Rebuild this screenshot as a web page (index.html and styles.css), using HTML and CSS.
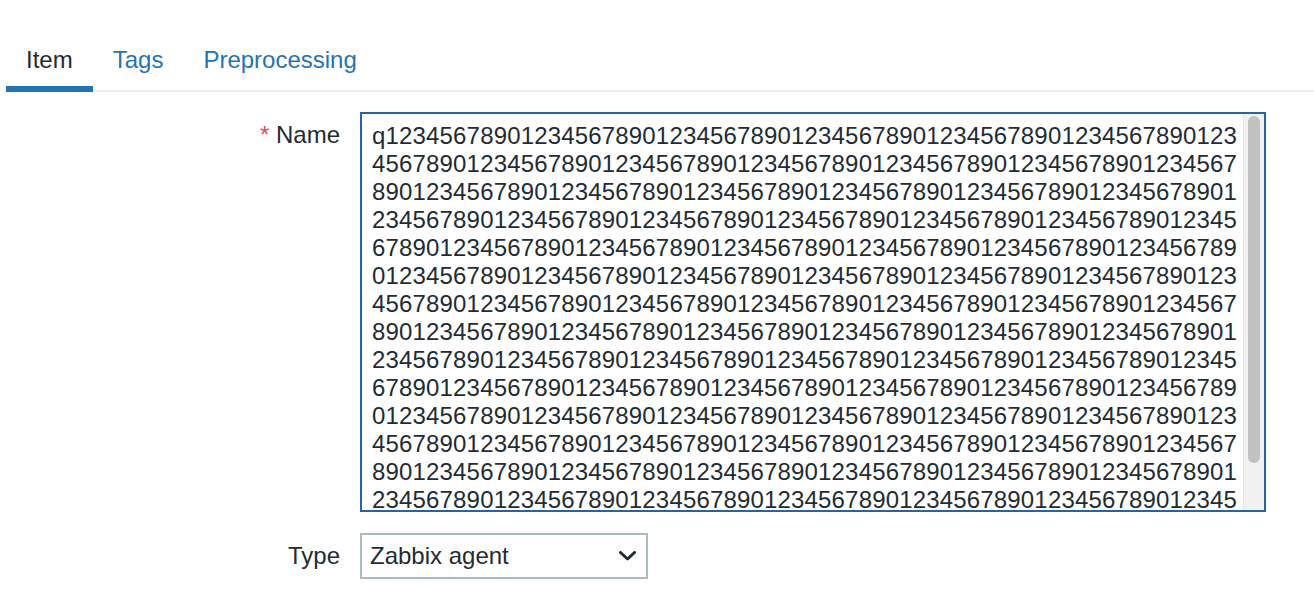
FILE: index.html
```html
<!DOCTYPE html>
<html>
<head>
<meta charset="utf-8">
<link rel="stylesheet" href="styles.css">
</head>
<body>
<div class="tabs">
  <div class="tab active">Item</div>
  <div class="tab">Tags</div>
  <div class="tab">Preprocessing</div>
</div>
<div class="form">
  <label class="label label-top"><span class="req">*</span> Name</label>
  <div class="textarea-box">
    <textarea class="name-field" spellcheck="false">q1234567890123456789012345678901234567890123456789012345678901234567890123456789012345678901234567890123456789012345678901234567890123456789012345678901234567890123456789012345678901234567890123456789012345678901234567890123456789012345678901234567890123456789012345678901234567890123456789012345678901234567890123456789012345678901234567890123456789012345678901234567890123456789012345678901234567890123456789012345678901234567890123456789012345678901234567890123456789012345678901234567890123456789012345678901234567890123456789012345678901234567890123456789012345678901234567890123456789012345678901234567890123456789012345678901234567890123456789012345678901234567890123456789012345678901234567890123456789012345678901234567890123456789012345678901234567890123456789012345678901234567890123456789012345678901234567890123456789012345678901234567890123456789012345678901234567890123456789012345678901234567890123456789012345678901234567890123456789012345678901234567890123456789012345678901234567890123456789012345678901234567890</textarea>
    <div class="scrollbar"><div class="thumb"></div></div>
  </div>
  <label class="label label-mid">Type</label>
  <div class="select">
    <span>Zabbix agent</span>
    <svg class="chev" width="17" height="10" viewBox="0 0 17 10"><path d="M1.5 1.5 L8.5 8 L15.5 1.5" fill="none" stroke="#1f2c33" stroke-width="3" stroke-linecap="round" stroke-linejoin="round"/></svg>
  </div>
</div>
</body>
</html>
```
FILE: styles.css
```css
html, body {
  margin: 0;
  padding: 0;
  background: #ffffff;
  font-family: "Liberation Sans", Arial, Helvetica, sans-serif;
  color: #1f2c33;
}

.tabs {
  display: flex;
  margin-left: 6px;
  padding-top: 32px;
  border-bottom: 2px solid #ebeef0;
}

.tab {
  font-size: 24px;
  line-height: 28px;
  padding: 14px 20px 12px;
  border-bottom: 6px solid transparent;
  margin-bottom: -2px;
  color: #1f74b4;
}

.tab.active {
  color: #1f2c33;
  border-bottom-color: #2273b4;
}

.form {
  display: grid;
  grid-template-columns: 340px 906px;
  column-gap: 20px;
  row-gap: 21px;
  margin-top: 20px;
}

.label {
  font-size: 24px;
  line-height: 28px;
  text-align: right;
  color: #1f2c33;
}

.label-top {
  padding-top: 9px;
}

.label-mid {
  align-self: center;
}

.req {
  color: #d64e4e;
}

.textarea-box {
  box-sizing: border-box;
  width: 906px;
  height: 400px;
  border: 2px solid #2a64a0;
  display: flex;
}

.name-field {
  box-sizing: border-box;
  flex: 1;
  height: 100%;
  margin: 0;
  padding: 8px 4px 8px 10px;
  border: 0;
  border-radius: 0;
  font-family: "Liberation Sans", Arial, Helvetica, sans-serif;
  font-size: 24px;
  line-height: 28px;
  letter-spacing: 0.17px;
  color: #1f2c33;
  background: #ffffff;
  resize: none;
  outline: none;
  overflow: hidden;
  word-break: break-all;
}

.scrollbar {
  box-sizing: border-box;
  width: 21px;
  flex: none;
  background: #f1f1f1;
  border-left: 1px solid #e4e4e4;
  padding: 2px 4px 0 4px;
}

.thumb {
  height: 347px;
  background: #c1c1c1;
  border-radius: 6px;
}

.select {
  box-sizing: border-box;
  width: 288px;
  height: 46px;
  border: 2px solid #acbbc2;
  display: flex;
  align-items: center;
  justify-content: space-between;
  padding: 0 10px 0 8px;
  font-size: 24px;
  color: #1f2c33;
}

.chev {
  display: block;
}
```
